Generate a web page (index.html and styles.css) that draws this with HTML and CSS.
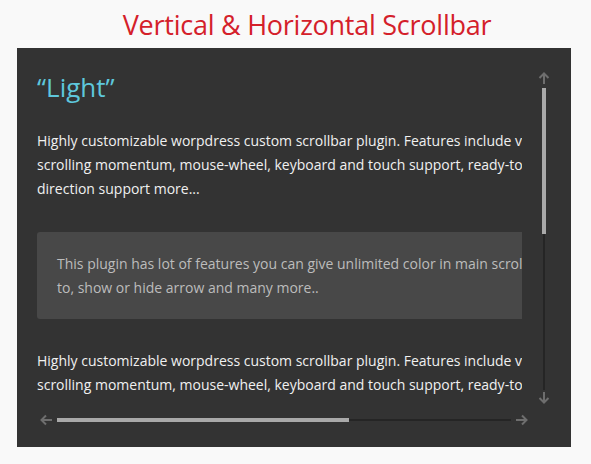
FILE: index.html
```html
<!DOCTYPE html>
<html>
<head>
<meta charset="utf-8">
<link rel="stylesheet" href="styles.css">
</head>
<body>
<h1 class="title">Vertical &amp; Horizontal Scrollbar</h1>
<div class="panel">
  <div class="viewport">
    <div class="content">
      <h2 class="heading">“Light”</h2>
      <p class="para">Highly customizable worpdress custom scrollbar plugin. Features include vertical and horizontal<br>scrolling momentum, mouse-wheel, keyboard and touch support, ready-to-use themes and RTL<br>direction support more...</p>
      <div class="note">This plugin has lot of features you can give unlimited color in main scrollbar and rail, set the arrows<br>to, show or hide arrow and many more..</div>
      <p class="para">Highly customizable worpdress custom scrollbar plugin. Features include vertical and horizontal<br>scrolling momentum, mouse-wheel, keyboard and touch support, ready-to-use themes and RTL<br>direction support more...</p>
    </div>
  </div>
  <div class="vbar">
    <svg class="arrow" width="12" height="12" viewBox="0 0 12 12"><path d="M6 12V1.5M1.5 6L6 1.5 10.5 6" fill="none" stroke="#6e6e6e" stroke-width="2"/></svg>
    <div class="vtrack"><div class="vthumb"></div></div>
    <svg class="arrow" width="12" height="12" viewBox="0 0 12 12"><path d="M6 0V10.5M1.5 6L6 10.5 10.5 6" fill="none" stroke="#6e6e6e" stroke-width="2"/></svg>
  </div>
  <div class="hbar">
    <svg class="arrow" width="12" height="12" viewBox="0 0 12 12"><path d="M12 6H1.5M6 1.5L1.5 6 6 10.5" fill="none" stroke="#6e6e6e" stroke-width="2"/></svg>
    <div class="htrack"><div class="hthumb"></div></div>
    <svg class="arrow" width="12" height="12" viewBox="0 0 12 12"><path d="M0 6H10.5M6 1.5L10.5 6 6 10.5" fill="none" stroke="#6e6e6e" stroke-width="2"/></svg>
  </div>
</div>
</body>
</html>
```
FILE: styles.css
```css
html, body {
  margin: 0;
  padding: 0;
  background: #f9f9f9;
}
body {
  font-family: "Open Sans", "Noto Sans", sans-serif;
}
.title {
  margin: 0;
  height: 48px;
  display: flex;
  align-items: center;
  justify-content: center;
  padding-left: 23px;
  font-family: "Open Sans", sans-serif;
  font-weight: 400;
  font-size: 27px;
  letter-spacing: -0.25px;
  color: #d4202a;
}
.panel {
  margin-left: 17px;
  width: 554px;
  height: 399px;
  background: #333333;
  display: grid;
  grid-template-columns: 505px 1fr;
  grid-template-rows: 352px 1fr;
}
.viewport {
  overflow: hidden;
  padding: 21px 0 0 20px;
}
.content {
  width: 700px;
}
.heading {
  margin: 0 0 24px;
  font-weight: 400;
  font-size: 26px;
  line-height: 36px;
  color: #5ec7dc;
}
.para {
  margin: 0;
  font-size: 14px;
  line-height: 24px;
  color: #f0f0f0;
  white-space: nowrap;
}
.note {
  margin: 31px 0 30px;
  padding: 20px 20px 19px;
  background: #484848;
  border-radius: 3px;
  font-size: 14px;
  line-height: 24px;
  color: #bcbcbc;
  white-space: nowrap;
}
.vbar {
  grid-row: 1 / 3;
  grid-column: 2;
  display: flex;
  flex-direction: column;
  align-items: center;
  width: 12px;
  height: 332px;
  margin-left: 16px;
  padding-top: 24px;
  gap: 4px;
}
.arrow {
  display: block;
  flex: none;
}
.vtrack {
  flex: 1;
  width: 4px;
  margin-bottom: -2px;
  background: linear-gradient(to right, transparent 1px, #252525 1px, #252525 3px, transparent 3px);
}
.vthumb {
  height: 146px;
  width: 4px;
  background: #a9a9a9;
}
.hbar {
  grid-row: 2;
  grid-column: 1 / 3;
  display: flex;
  align-items: center;
  height: 12px;
  margin-top: 14px;
  padding: 0 43px 0 23px;
  gap: 5px;
}
.htrack {
  flex: 1;
  height: 4px;
  background: linear-gradient(to bottom, transparent 1px, #252525 1px, #252525 3px, transparent 3px);
}
.hthumb {
  width: 292px;
  height: 4px;
  background: #a9a9a9;
}
```
